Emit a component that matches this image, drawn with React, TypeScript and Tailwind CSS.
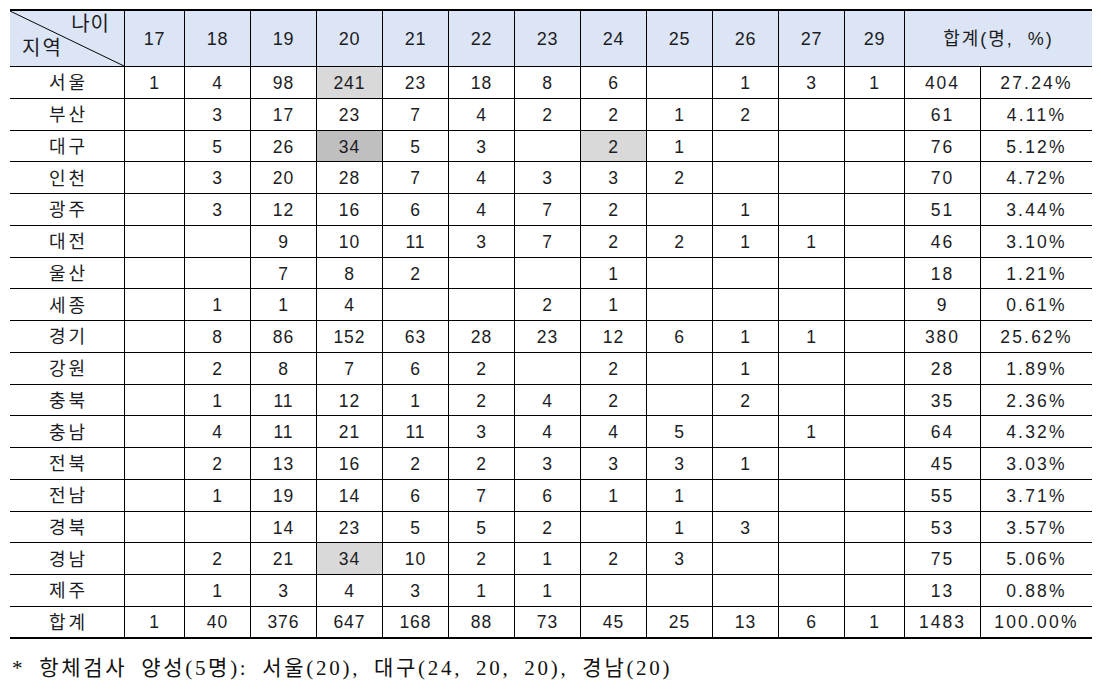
import React from "react";

type Shade = "light" | "dark";

interface Row {
  region: string;
  counts: (number | null)[];
  total: number;
  pct: string;
  shade?: Record<number, Shade>;
}

const ages = [17, 18, 19, 20, 21, 22, 23, 24, 25, 26, 27, 29];

const _ = null;

const rows: Row[] = [
  { region: "서울", counts: [1, 4, 98, 241, 23, 18, 8, 6, _, 1, 3, 1], total: 404, pct: "27.24%", shade: { 3: "light" } },
  { region: "부산", counts: [_, 3, 17, 23, 7, 4, 2, 2, 1, 2, _, _], total: 61, pct: "4.11%" },
  { region: "대구", counts: [_, 5, 26, 34, 5, 3, _, 2, 1, _, _, _], total: 76, pct: "5.12%", shade: { 3: "dark", 7: "light" } },
  { region: "인천", counts: [_, 3, 20, 28, 7, 4, 3, 3, 2, _, _, _], total: 70, pct: "4.72%" },
  { region: "광주", counts: [_, 3, 12, 16, 6, 4, 7, 2, _, 1, _, _], total: 51, pct: "3.44%" },
  { region: "대전", counts: [_, _, 9, 10, 11, 3, 7, 2, 2, 1, 1, _], total: 46, pct: "3.10%" },
  { region: "울산", counts: [_, _, 7, 8, 2, _, _, 1, _, _, _, _], total: 18, pct: "1.21%" },
  { region: "세종", counts: [_, 1, 1, 4, _, _, 2, 1, _, _, _, _], total: 9, pct: "0.61%" },
  { region: "경기", counts: [_, 8, 86, 152, 63, 28, 23, 12, 6, 1, 1, _], total: 380, pct: "25.62%" },
  { region: "강원", counts: [_, 2, 8, 7, 6, 2, _, 2, _, 1, _, _], total: 28, pct: "1.89%" },
  { region: "충북", counts: [_, 1, 11, 12, 1, 2, 4, 2, _, 2, _, _], total: 35, pct: "2.36%" },
  { region: "충남", counts: [_, 4, 11, 21, 11, 3, 4, 4, 5, _, 1, _], total: 64, pct: "4.32%" },
  { region: "전북", counts: [_, 2, 13, 16, 2, 2, 3, 3, 3, 1, _, _], total: 45, pct: "3.03%" },
  { region: "전남", counts: [_, 1, 19, 14, 6, 7, 6, 1, 1, _, _, _], total: 55, pct: "3.71%" },
  { region: "경북", counts: [_, _, 14, 23, 5, 5, 2, _, 1, 3, _, _], total: 53, pct: "3.57%" },
  { region: "경남", counts: [_, 2, 21, 34, 10, 2, 1, 2, 3, _, _, _], total: 75, pct: "5.06%", shade: { 3: "light" } },
  { region: "제주", counts: [_, 1, 3, 4, 3, 1, 1, _, _, _, _, _], total: 13, pct: "0.88%" },
  { region: "합계", counts: [1, 40, 376, 647, 168, 88, 73, 45, 25, 13, 6, 1], total: 1483, pct: "100.00%" },
];

const font = { fontFamily: '"Liberation Sans", "Noto Sans CJK KR", sans-serif' };

function shadeClass(s?: Shade) {
  if (s === "light") return "bg-[#d9d9d9]";
  if (s === "dark") return "bg-[#bfbfbf]";
  return "";
}

export default function App() {
  return (
    <div className="bg-white w-[1101px] h-[689px] pl-[10px] pt-[9px] text-[#1c1c24]" style={font}>
      <table className="table-fixed border-separate border-spacing-0 w-[1082px]">
        <colgroup>
          <col className="w-[114px]" />
          <col className="w-[60px]" />
          {ages.slice(1, 11).map((a) => (
            <col key={a} className="w-[66px]" />
          ))}
          <col className="w-[60px]" />
          <col className="w-[76px]" />
          <col className="w-[112px]" />
        </colgroup>
        <thead>
          <tr className="bg-[#dce5f6]">
            <th className="relative h-[58px] border-t-2 border-b border-black p-0 font-normal">
              <svg className="absolute inset-0 w-full h-full" viewBox="0 0 114 56" preserveAspectRatio="none">
                <line x1="0" y1="0" x2="114" y2="56" stroke="#000" strokeWidth="1" />
              </svg>
              <div className="relative flex flex-col h-full text-[20px] leading-none">
                <span className="self-end pr-[14px] pt-[3px] tracking-[1px]">나이</span>
                <span className="self-start pl-[12px] pt-[4px] tracking-[2px]">지역</span>
              </div>
            </th>
            {ages.map((a) => (
              <th key={a} className="h-[58px] border-t-2 border-b border-l border-black p-0 pt-[2px] font-normal text-[18px] tracking-[0.8px]">
                {a}
              </th>
            ))}
            <th colSpan={2} className="h-[58px] border-t-2 border-b border-l border-black p-0 pt-[2px] font-normal text-[18px] tracking-[2px]">
              합계(명,&nbsp; %)
            </th>
          </tr>
        </thead>
        <tbody>
          {rows.map((r, i) => {
            const last = i === rows.length - 1;
            const b = last ? "border-b-2" : "border-b";
            return (
              <tr key={r.region} className="h-[31.75px]">
                <td className={`${b} border-black p-0 pt-[2px] text-center text-[18px] tracking-[3px] leading-none`}>
                  <span className="pl-[3px]">{r.region}</span>
                </td>
                {r.counts.map((c, j) => (
                  <td
                    key={j}
                    className={`${b} border-l border-black p-0 pt-[3px] text-center text-[17.5px] tracking-[1px] leading-none ${shadeClass(r.shade?.[j])}`}
                  >
                    {c ?? ""}
                  </td>
                ))}
                <td className={`${b} border-l border-black p-0 pt-[3px] text-center text-[17.5px] tracking-[2px] leading-none`}>{r.total}</td>
                <td className={`${b} border-l border-black p-0 pt-[3px] text-center text-[17.5px] tracking-[2.2px] leading-none`}>{r.pct}</td>
              </tr>
            );
          })}
        </tbody>
      </table>
      <p
        className="mt-[17px] pl-[2px] text-[21px] leading-[24px] tracking-[2.7px] [word-spacing:6px] text-[#111]"
        style={{ fontFamily: '"Liberation Serif", "Noto Sans CJK KR", serif' }}
      >
        * 항체검사 양성(5명): 서울(20), 대구(24, 20, 20), 경남(20)
      </p>
    </div>
  );
}
